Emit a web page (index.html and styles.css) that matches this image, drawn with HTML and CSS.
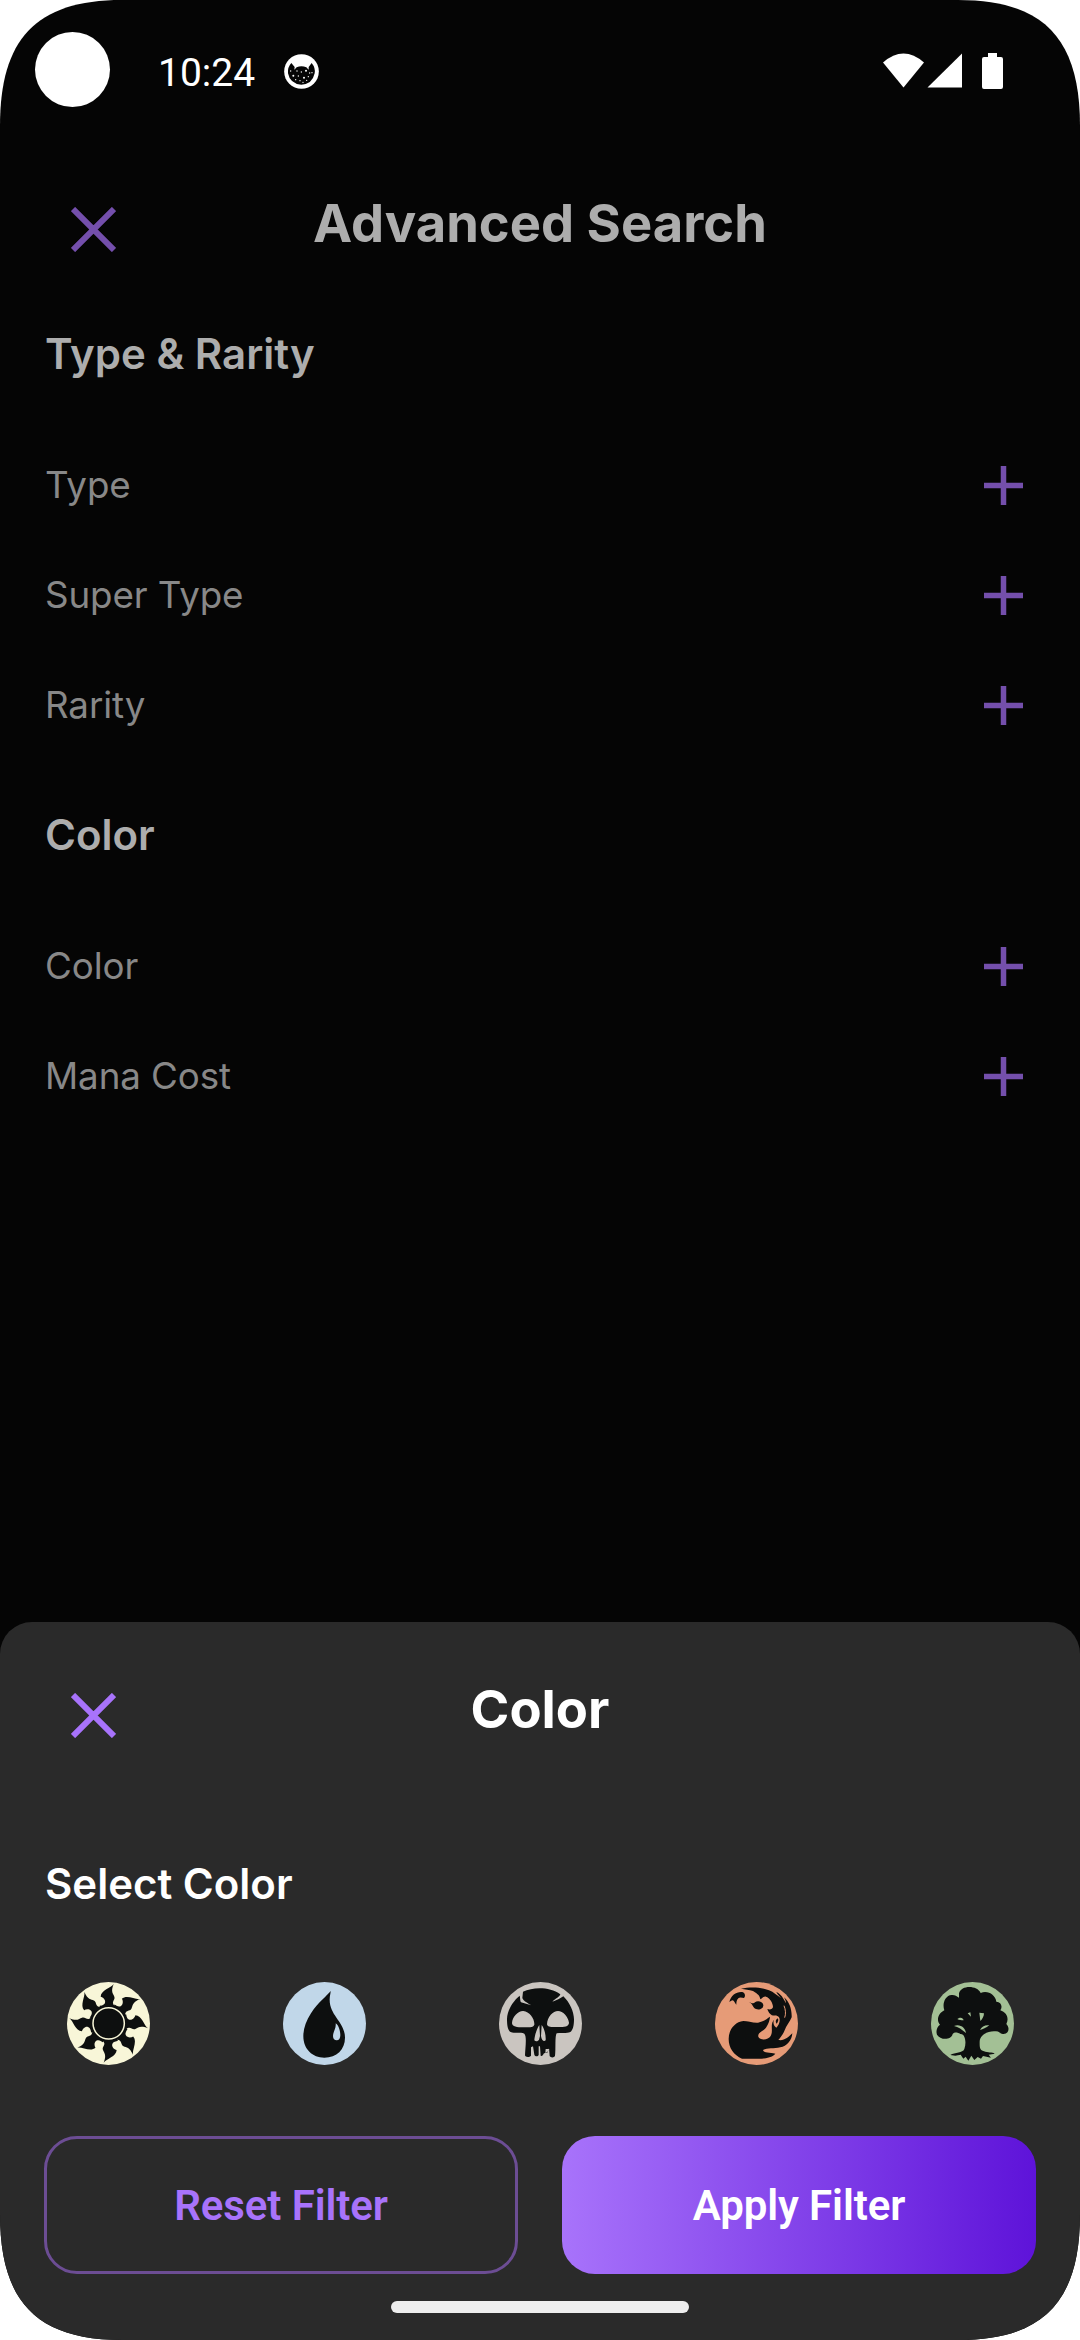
FILE: index.html
```html
<!DOCTYPE html>
<html lang="en">
<head>
<meta charset="utf-8">
<title>Advanced Search</title>
<link rel="stylesheet" href="styles.css">
</head>
<body>
<div class="screen">
  <header class="status">
    <span class="camera"></span>
    <span class="time">10:24</span>
    <svg class="cat" viewBox="0 0 105 105">
      <circle cx="52.500" cy="52.500" r="52" fill="#fff"/>
      <path d="M22 27 L32 39 L31 47 L38 40 Q52 34 67 40 L74 47 L74 39 L83 27 Q95 42 92 58 Q85 91 52 92 Q18 90 12 58 Q10 40 22 27Z" fill="#050505"/>
      <g fill="#fff"><circle cx="28" cy="65" r="3"/><circle cx="66" cy="50" r="3"/><circle cx="60" cy="71" r="3"/><circle cx="39" cy="51" r="2"/><circle cx="52" cy="54" r="2"/><circle cx="77" cy="57" r="2"/><circle cx="43" cy="66" r="2"/><circle cx="73" cy="68" r="2"/><circle cx="48" cy="80" r="2"/><circle cx="35" cy="77" r="2"/><circle cx="57" cy="85" r="2"/><circle cx="84" cy="56" r="2"/><circle cx="20" cy="51" r="2"/><circle cx="68" cy="79" r="2"/></g>
    </svg>
    <svg class="system" viewBox="0 0 120 36" fill="#fff">
      <path d="M0 9.500 Q20.500 -8.500 41 9.500 L20.500 34.500Z"/>
      <path d="M79 0.500 V34.500 H44.500Z"/>
      <path d="M105 0 H114 V4 H118 Q120 4 120 6 V34 Q120 36 118 36 H101 Q99 36 99 34 V6 Q99 4 101 4 H105Z"/>
    </svg>
  </header>

  <main class="page">
    <div class="bar">
      <svg class="close" viewBox="0 0 45 45"><path d="M2 2 L43 43 M43 2 L2 43"/></svg>
      <h1 class="title">Advanced Search</h1>
    </div>
    <section class="group">
      <h2 class="heading">Type &amp; Rarity</h2>
      <div class="row"><span>Type</span><svg class="plus" viewBox="0 0 39 39"><path d="M19.500 0 V39 M0 19.500 H39"/></svg></div>
      <div class="row"><span>Super Type</span><svg class="plus" viewBox="0 0 39 39"><path d="M19.500 0 V39 M0 19.500 H39"/></svg></div>
      <div class="row"><span>Rarity</span><svg class="plus" viewBox="0 0 39 39"><path d="M19.500 0 V39 M0 19.500 H39"/></svg></div>
    </section>
    <section class="group">
      <h2 class="heading">Color</h2>
      <div class="row"><span>Color</span><svg class="plus" viewBox="0 0 39 39"><path d="M19.500 0 V39 M0 19.500 H39"/></svg></div>
      <div class="row"><span>Mana Cost</span><svg class="plus" viewBox="0 0 39 39"><path d="M19.500 0 V39 M0 19.500 H39"/></svg></div>
    </section>
  </main>

  <section class="sheet">
    <div class="bar">
      <svg class="close" viewBox="0 0 45 45"><path d="M2 2 L43 43 M43 2 L2 43"/></svg>
      <h2 class="title">Color</h2>
    </div>
    <h3 class="heading">Select Color</h3>
    <div class="mana">
      <svg viewBox="51 36 249 249">
        <defs><path id="ray" d="M191 42 C183 54 153 60 152 80 C159 81 168 90 165 98 C162 106 154 106 148 108 L156 118 L200 118 L206 111 C196 110 190 107 189 100 C188 92 196 88 193 80 C190 71 181 66 191 42Z"/></defs>
        <circle cx="175.500" cy="160.500" r="124.500" fill="#f8f6d8"/>
        <g fill="#0d0f0f">
          <use href="#ray"/><use href="#ray" transform="rotate(45 176 160)"/><use href="#ray" transform="rotate(90 176 160)"/><use href="#ray" transform="rotate(135 176 160)"/><use href="#ray" transform="rotate(180 176 160)"/><use href="#ray" transform="rotate(225 176 160)"/><use href="#ray" transform="rotate(270 176 160)"/><use href="#ray" transform="rotate(315 176 160)"/>
          <circle cx="176" cy="160" r="52"/>
        </g>
        <circle cx="176" cy="160" r="47" fill="none" stroke="#f8f6d8" stroke-width="4.500"/>
      </svg>
      <svg viewBox="39 36 249 249">
        <circle cx="163.500" cy="160.500" r="124.500" fill="#c1d7e9"/>
        <path fill="#0d0f0f" d="M182 63 C172 77 144 96 123 130 C108 154 100 176 100 198 C100 238 128 263 163 263 C200 263 225 238 225 203 C225 157 178 137 179 88 C179 77 182 70 182 63Z"/>
        <path fill="#c1d7e9" d="M197 160 C199 175 189 185 189 198 C189 207 194 211 200 211 C207 211 211 205 211 196 C211 182 206 166 197 160Z"/>
      </svg>
      <svg viewBox="42 36 249 249">
        <circle cx="166.500" cy="160.500" r="124.500" fill="#cac5c0"/>
        <path fill="#0d0f0f" d="M114 65 C145 51 194 50 226 73 C225 80 211 86 202 95 C215 91 226 85 235 79 C254 97 267 126 267 148 C267 166 264 181 256 186 C245 191 227 187 215 190 C209 198 213 236 210 258 C207 264 196 263 194 258 L192 235 L187 248 L177 250 C174 256 170 260 167 257 L165 229 L161 229 L161 255 C158 261 150 259 148 254 L144 229 L138 232 L138 257 C134 262 121 262 120 256 C121 232 126 199 118 191 C106 186 88 191 77 186 C67 181 66 160 66 147 C67 121 83 94 104 77 C106 84 105 93 108 97 C118 100 128 103 139 106 C128 99 116 94 112 84Z"/>
        <path fill="#cac5c0" d="M115 123 C100 122 82 140 81 159 C81 170 97 172 114 172 C131 172 145 173 148 164 C149 145 133 125 115 123Z M219 123 C204 123 187 140 186 163 C188 173 203 171 220 171 C237 171 252 170 252 158 C249 139 234 123 219 123Z M163 165 C156 175 149 195 148 211 C153 216 160 213 162 209 L165 198Z M170 165 L168 198 C170 212 177 216 182 211 C183 194 178 175 170 165Z M182 237 L193 237 L187 246 L181 249Z"/>
      </svg>
      <svg viewBox="45 36 249 249">
        <circle cx="169.500" cy="160.500" r="124.500" fill="#e69b77"/>
        <path fill="#0d0f0f" d="M88 96 C93 75 110 64 127 66 C136 69 137 79 132 84 C127 84 120 80 115 85 C109 91 109 98 109 104 C104 99 102 91 98 91 C94 91 91 95 88 96Z M146 95 C155 99 160 103 165 97 C172 91 188 94 190 105 C191 116 177 121 168 117 C158 113 159 101 146 95Z"/>
        <path fill="#0d0f0f" d="M123 56 C150 50 185 51 207 61 C221 66 232 77 243 85 C238 77 230 71 229 66 C243 72 251 86 257 99 C259 94 254 87 252 82 C269 96 276 120 275 142 C270 154 258 169 254 181 C249 193 242 202 235 210 C253 213 265 202 277 190 C276 211 260 229 241 232 C222 236 202 234 189 240 C190 249 211 248 226 251 C215 263 196 266 177 266 L126 266 C101 255 86 234 86 207 C86 178 105 156 130 153 C143 153 158 159 174 158 C188 157 202 145 210 140 C209 154 201 173 191 180 C181 186 173 191 175 200 C179 211 204 212 212 198 C220 184 211 168 219 154 C224 145 231 142 229 136 C215 139 207 132 202 117 C209 120 218 118 219 111 C219 99 209 83 198 80 C190 78 187 86 181 88 C179 73 168 70 159 63 C147 58 136 59 123 56Z"/>
        <path fill="#e69b77" d="M229 137 C244 139 241 161 229 173 C216 165 219 145 229 137Z"/>
        <path fill="#0d0f0f" d="M233 145 C225 150 227 158 230 161 C234 155 237 150 233 145Z"/>
        <path fill="none" stroke="#e69b77" stroke-width="3" d="M252 107 C257 119 258 132 254 143"/>
      </svg>
      <svg viewBox="48 36 249 249">
        <circle cx="172.500" cy="160.500" r="124.500" fill="#a3c095"/>
        <path fill="#0d0f0f" d="M132 70 C139 44 187 46 197 69 C218 60 241 74 244 95 C258 96 264 109 256 121 C275 127 283 145 274 162 C287 176 279 193 264 192 C255 191 252 184 243 184 C220 181 194 195 194 215 C194 230 193 240 207 244 C218 249 232 246 239 251 L221 254 L228 263 L204 258 L198 266 L188 261 L178 270 L169 257 L160 272 L152 260 L145 266 L137 254 L121 257 L106 255 C120 246 143 250 148 237 C155 219 151 190 136 192 C128 188 120 185 113 192 C108 211 76 211 66 194 C62 184 66 170 75 164 C65 155 66 132 88 121 C81 102 90 76 110 75 C118 74 125 78 132 83Z"/>
        <path fill="#a3c095" d="M158 130 L166 127 L168 140Z M193 128 L207 130 C207 139 202 148 196 153Z M127 147 C136 140 144 143 146 151 C139 151 132 150 127 147Z M117 168 C136 161 151 174 153 189 C141 179 130 171 117 168Z M195 180 C200 169 211 164 223 166 C213 174 204 177 195 180Z"/>
      </svg>
    </div>
    <div class="actions">
      <button class="button reset">Reset Filter</button>
      <button class="button apply">Apply Filter</button>
    </div>
    <div class="home"></div>
  </section>
</div>
</body>
</html>
```
FILE: styles.css
```css
* { box-sizing: border-box; }

body {
  margin: 0;
  background: #fff;
  font-family: Inter, "Liberation Sans", sans-serif;
}

h1, h2, h3 { margin: 0; }

svg { display: block; flex: none; }

.screen {
  width: 1080px;
  height: 2340px;
  display: flex;
  flex-direction: column;
  background: #050505;
  clip-path: path("M0 126 C0 40 35 0 122 0 H958 C1045 0 1080 40 1080 126 V2214 C1080 2300 1045 2340 958 2340 H122 C35 2340 0 2300 0 2214 Z");
}

.status {
  height: 158px;
  display: flex;
  align-items: flex-start;
  padding: 32px 77px 0 35px;
}

.camera {
  width: 75px;
  height: 75px;
  border-radius: 50%;
  background: #fff;
}

.time {
  width: 125px;
  margin: 18px 0 0 48px;
  font: 400 39px/46px Roboto, sans-serif;
  color: #fff;
}

.cat {
  width: 35px;
  height: 35px;
  margin: 22px 0 0 1px;
}

.system {
  width: 120px;
  height: 36px;
  margin: 21px 0 0 auto;
}

.page { flex: 1; color: #adadad; }

.bar {
  height: 132px;
  display: grid;
  grid-template-columns: 116px 1fr 116px;
}

.close {
  width: 45px;
  height: 45px;
  margin: 49px 0 0 71px;
  fill: none;
  stroke: #744fac;
  stroke-width: 6;
}

.title {
  padding-top: 33px;
  font-size: 52.5px;
  line-height: 64px;
  font-weight: 700;
  text-align: center;
}

.heading {
  padding-left: 45px;
  font-size: 42px;
  line-height: 50px;
  font-weight: 600;
}

.group { padding-top: 39px; height: 481px; }

.group .heading { margin-bottom: 51px; }

.row {
  height: 110px;
  display: flex;
  align-items: center;
  justify-content: space-between;
  padding: 0 57px 0 45px;
  font-size: 36.75px;
  line-height: 44px;
  letter-spacing: -0.1px;
  color: #888;
}

.plus {
  width: 39px;
  height: 39px;
  stroke: #744fac;
  stroke-width: 5.5;
}

.sheet {
  height: 718px;
  padding-top: 22px;
  border-radius: 32px 32px 0 0;
  background: #2a2a2a;
  color: #fff;
}

.sheet .close { stroke: #a873fb; }

.sheet .heading { margin-top: 83px; }

.mana {
  display: flex;
  justify-content: space-between;
  margin-top: 73px;
  padding: 0 66px 0 67px;
}

.mana svg { width: 83px; height: 83px; }

.actions {
  display: grid;
  grid-template-columns: 1fr 1fr;
  gap: 44px;
  margin-top: 71px;
  padding: 0 44px;
}

.button {
  height: 138px;
  border: 0;
  border-radius: 33px;
  padding: 1px 0 0;
  font: 600 42px/50px Roboto, sans-serif;
  letter-spacing: -0.1px;
}

.reset {
  border: 3px solid #6c4d94;
  background: transparent;
  color: #a873fb;
}

.apply {
  background: linear-gradient(90deg, #a873fb, #5e13d9);
  color: #fff;
}

.home {
  width: 298px;
  height: 12px;
  margin: 27px auto 0;
  border-radius: 6px;
  background: #eee;
}
```
